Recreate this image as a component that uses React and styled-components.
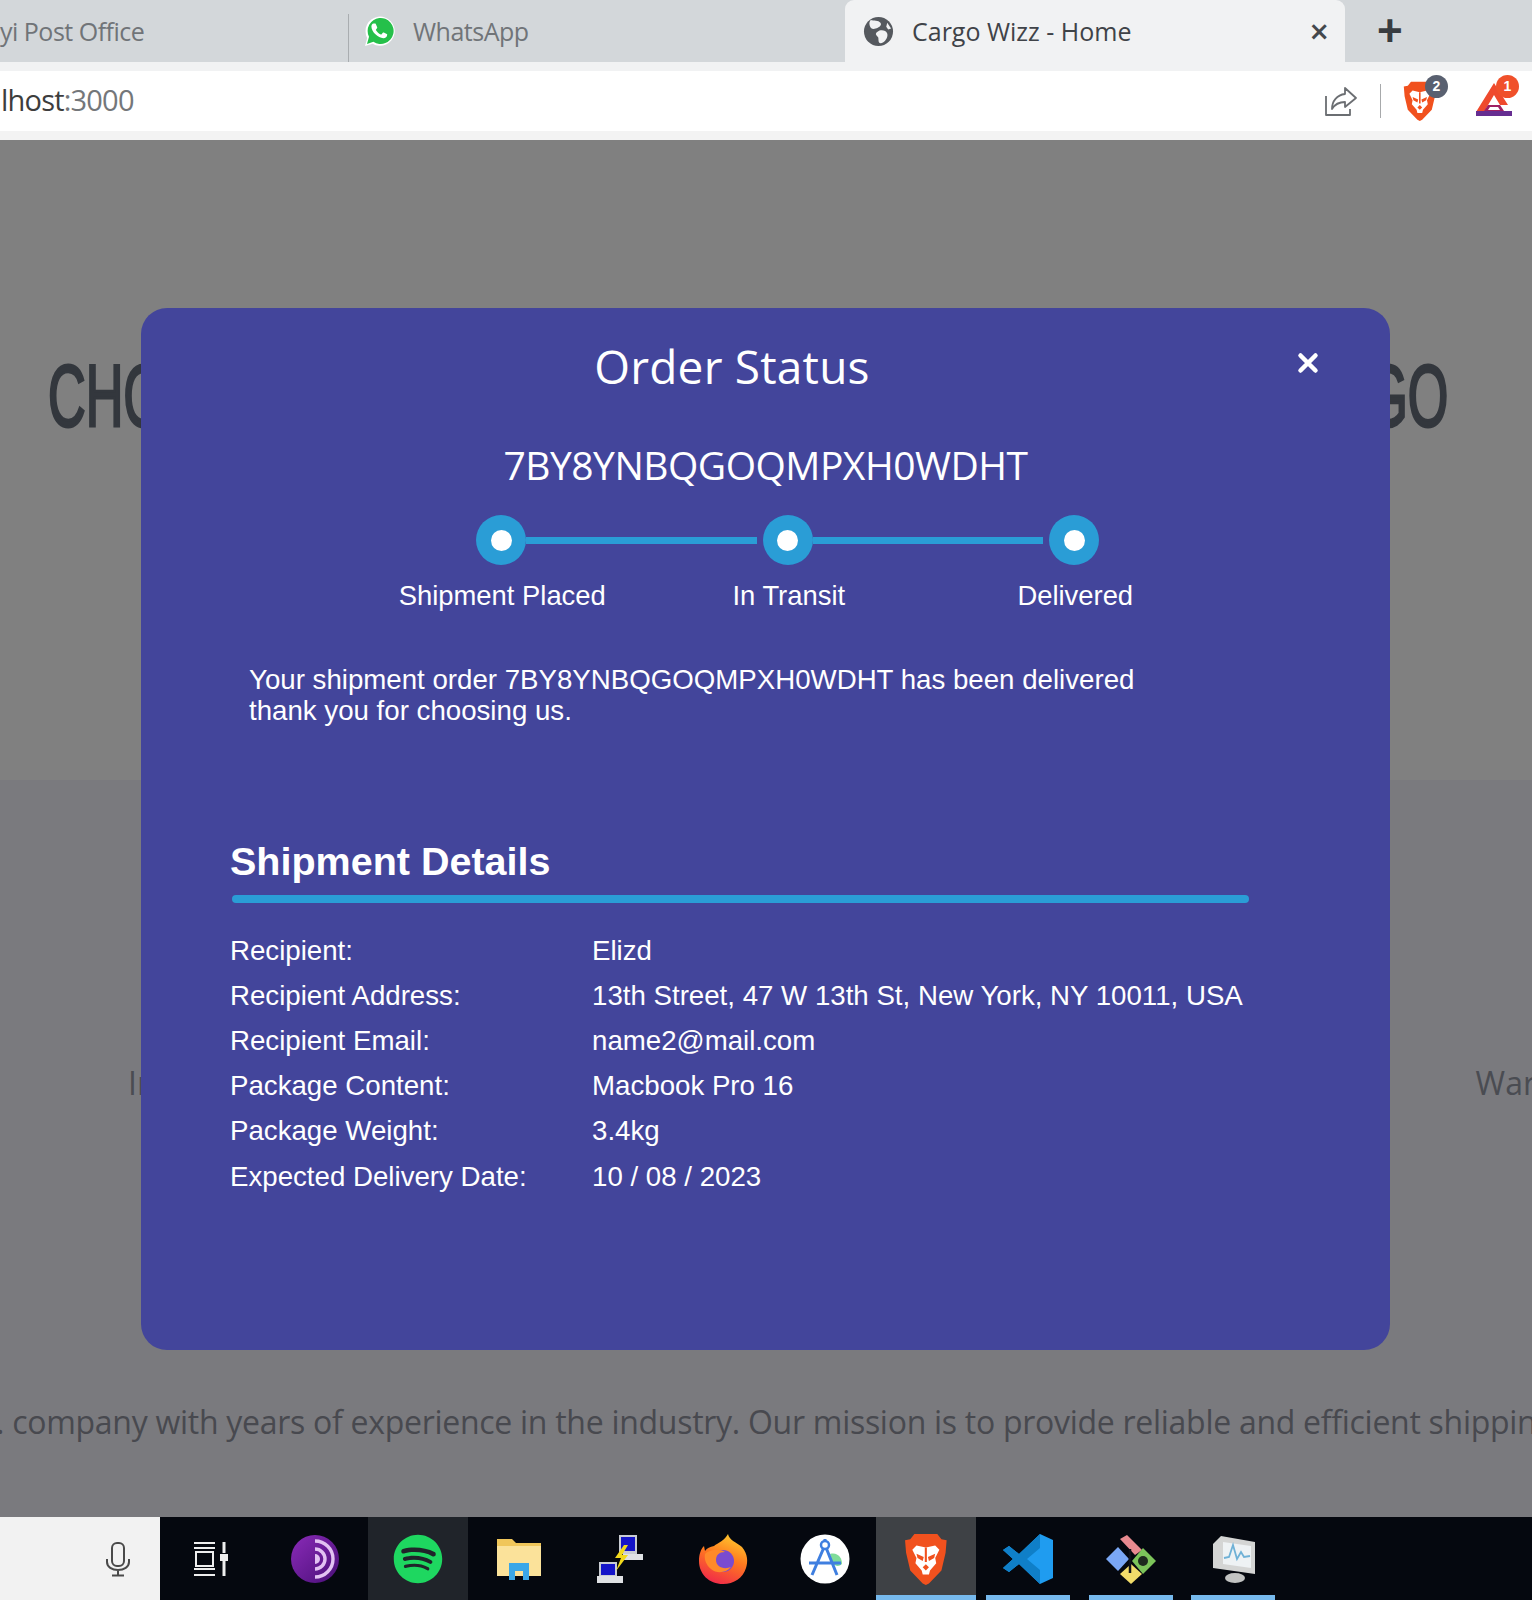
import { Fragment } from 'react';
import styled, { createGlobalStyle } from 'styled-components';
import { FaSpotify } from 'react-icons/fa';

const GlobalStyle = createGlobalStyle`
  html, body { margin: 0; padding: 0; background: #808080; }
  #root { width: 1532px; height: 1600px; overflow: hidden; }
`

const Screen = styled.div`
  display: flex;
  flex-direction: column;
  width: 1532px;
  height: 1600px;
  font-family: 'Liberation Sans', Arial, sans-serif;
`

/* browser chrome */
const TabStrip = styled.div`
  display: flex;
  align-items: stretch;
  height: 62px;
  flex: none;
  background: #d3d7da;
`

const Tab = styled.div`
  display: flex;
  align-items: center;
  box-sizing: border-box;
  width: ${p => p.$width}px;
  gap: 18px;
  padding-left: ${p => p.$inset}px;
  font-family: 'Open Sans', sans-serif;
  font-size: 25px;
  letter-spacing: -0.5px;
  color: #707478;
`

const TabDivider = styled.div`
  width: 1px;
  margin-top: 14px;
  background: #a9adb0;
`

const ActiveTab = styled(Tab)`
  position: relative;
  height: 71px;
  padding-right: 16px;
  padding-bottom: 9px;
  border-radius: 9px 9px 0 0;
  background: #f1f2f3;
  color: #3f4348;
  letter-spacing: 0;
  z-index: 1;
`

const TabTitle = styled.span`
  flex: 1;
`

const TabClose = styled.span`
  font-size: 34px;
  font-weight: 600;
  line-height: 1;
  color: #44484c;
`

const NewTab = styled.div`
  margin-left: 32px;
  align-self: center;
  font-family: 'Liberation Sans', sans-serif;
  font-size: 44px;
  font-weight: 700;
  line-height: 1;
  color: #383c40;
`

const Toolbar = styled.div`
  display: flex;
  align-items: center;
  box-sizing: border-box;
  height: 78px;
  flex: none;
  background: #fff;
  border-top: 9px solid #f1f2f3;
  border-bottom: 9px solid #f3f3f3;
`

const Url = styled.div`
  flex: 1;
  padding: 0 0 3px 1px;
  font-family: 'Open Sans', sans-serif;
  font-size: 29px;
  letter-spacing: -0.8px;
  color: #3d3d3d;
  span { color: #74777a; }
`

const ToolDivider = styled.div`
  width: 1px;
  height: 34px;
  margin: 0 22px 0 22px;
  background: #a7a9ab;
`

const ExtIcon = styled.div`
  position: relative;
  width: 36px;
  height: 40px;
  margin-right: ${p => p.$gap}px;
`

const ExtBadge = styled.span`
  position: absolute;
  top: -6px;
  right: ${p => p.$right}px;
  width: 23px;
  height: 23px;
  border-radius: 50%;
  background: ${p => p.$color};
  color: #fff;
  font-size: 14px;
  font-weight: 700;
  line-height: 23px;
  text-align: center;
`

/* dimmed page under the dialog */
const Page = styled.main`
  position: relative;
  flex: 1;
  display: flex;
  flex-direction: column;
  overflow: hidden;
  background: #7a7a7e;
`

const Hero = styled.section`
  display: flex;
  justify-content: space-between;
  box-sizing: border-box;
  height: 640px;
  flex: none;
  padding: 214px 84px 0 48px;
  background: #808080;
`

const HeroTitle = styled.h1`
  margin: 0;
  font-size: 87px;
  font-weight: 400;
  line-height: 84px;
  color: #33373d;
  -webkit-text-stroke: 3px #33373d;
  transform: scaleX(0.6);
  transform-origin: ${p => p.$origin};
`

const ServiceRow = styled.div`
  display: flex;
  justify-content: space-between;
  padding: 281px 0 0 128px;
  margin-right: -4px;
  font-family: 'Open Sans', sans-serif;
  font-size: 32px;
  line-height: 44px;
  color: #4a4c52;
`

const About = styled.p`
  margin: 295px 0 0 -4px;
  font-family: 'Open Sans', sans-serif;
  font-size: 32px;
  line-height: 44px;
  letter-spacing: -0.28px;
  white-space: nowrap;
  color: #48494f;
`

/* dialog */
const Modal = styled.div`
  position: absolute;
  left: 141px;
  top: 168px;
  display: flex;
  flex-direction: column;
  box-sizing: border-box;
  width: 1249px;
  height: 1042px;
  padding-top: 28px;
  border-radius: 26px;
  background: #43459b;
  color: #fff;
`

const ModalHeader = styled.div`
  display: flex;
  align-items: center;
  height: 60px;
`

const ModalTitle = styled.h2`
  flex: 1;
  margin: 0;
  font-family: 'Open Sans', sans-serif;
  font-size: 46px;
  font-weight: 500;
  letter-spacing: 0.2px;
  text-align: center;
`

const CloseButton = styled.button`
  display: flex;
  width: 67px;
  height: 60px;
  padding: 0 0 7px 0;
  align-items: center;
  justify-content: flex-start;
  border: 0;
  background: none;
  svg { margin-left: -26px; display: block; }
`

const OrderCode = styled.div`
  margin-top: 44px;
  font-family: 'Open Sans', sans-serif;
  font-size: 39px;
  line-height: 50px;
  letter-spacing: -0.5px;
  text-align: center;
`

const Track = styled.div`
  display: flex;
  align-items: center;
  width: 623px;
  margin: 25px 0 0 335px;
`

const TrackDot = styled.div`
  display: flex;
  align-items: center;
  justify-content: center;
  width: 50px;
  height: 50px;
  flex: none;
  border-radius: 50%;
  background: #2a9dd6;
  &::after {
    content: '';
    width: 21px;
    height: 21px;
    border-radius: 50%;
    background: #fff;
  }
`

const TrackLine = styled.div`
  flex: 1;
  height: 7px;
  margin-right: 6px;
  background: #2a9dd6;
`

const TrackLabels = styled.div`
  display: grid;
  grid-template-columns: repeat(3, 286.5px);
  margin: 15px 0 0 218px;
  font-size: 27.4px;
  line-height: 32px;
  text-align: center;
`

const Message = styled.p`
  width: 900px;
  margin: 53px 0 0 108px;
  font-size: 27.67px;
  line-height: 30.5px;
`

const SectionTitle = styled.h3`
  margin: 112px 0 0 89px;
  font-size: 39.5px;
  font-weight: 700;
  line-height: 46px;
`

const SectionRule = styled.div`
  width: 1017px;
  height: 8px;
  margin: 11px 0 0 91px;
  border-radius: 4px;
  background: #2a9dd6;
`

const Details = styled.dl`
  display: grid;
  grid-template-columns: 362px 1fr;
  grid-auto-rows: 45.2px;
  align-items: center;
  margin: 25px 0 0 89px;
  font-size: 27.67px;
  dt, dd { margin: 0; }
`

/* windows taskbar */
const Taskbar = styled.footer`
  display: flex;
  height: 83px;
  flex: none;
  background: #05080f;
`

const SearchBox = styled.div`
  display: flex;
  align-items: center;
  justify-content: flex-end;
  box-sizing: border-box;
  width: 160px;
  padding-right: 29px;
  background: #f2f2f2;
`

const TaskSlot = styled.div`
  position: relative;
  display: flex;
  align-items: center;
  justify-content: center;
  width: ${p => p.$width || 102}px;
  background: ${p => p.$active || 'transparent'};
  &::after {
    content: ${p => (p.$open ? "''" : 'none')};
    position: absolute;
    left: ${p => p.$inset || 0}px;
    right: ${p => p.$inset || 0}px;
    bottom: 0;
    height: 5px;
    background: #76b9ed;
  }
`

const WhatsAppIcon = () => (
  <svg width="32" height="32" viewBox="0 0 32 32">
    <path fill="#fff" d="M2 31l2.2-8A14.6 14.6 0 1 1 9.6 28.7z" />
    <path fill="#25c04a" d="M4 29l2-7.2A13 13 0 1 1 10.4 26.8z" />
    <path fill="#fff" d="M11.6 8.6c.5 0 1 0 1.3.7l1.3 3c.1.4 0 .8-.2 1l-1 1.2c-.2.3-.2.5 0 .8 1.2 2 2.7 3.3 4.8 4.2.3.1.6.1.8-.2l1.2-1.5c.3-.3.6-.3 1-.2l2.9 1.4c.4.2.6.4.5.8 0 2-1.8 3.4-3.8 3.4-5.5-.4-11.7-6-12-11.4 0-1.7.8-3.2 2.2-3.2z" />
  </svg>
)

const GlobeIcon = () => (
  <svg width="31" height="31" viewBox="0 0 32 32">
    <circle cx="16" cy="16" r="15" fill="#55595e" />
    <path fill="#f1f2f3" d="M8 4c3 1 8 0 10 3s-2 5-5 6-5 0-6-3 0-5 1-6zM17 15c3-1 7 0 8 3s-1 7-4 9-5 1-5-2 0-3-2-5 1-4 3-5zM25 7l4 6-3 1-2-3z" />
  </svg>
)

const ShareIcon = () => (
  <svg width="34" height="32" viewBox="0 0 34 32" fill="none" stroke="#6b6e72" strokeWidth="1.8" strokeLinejoin="round">
    <path d="M2 11v19h24v-6" />
    <path d="M21 3l11 10-11 9v-5c-6 0-10 2-13 7 0-8 5-14 13-15z" />
  </svg>
)

const BraveIcon = ({ size = 40 }) => (
  <svg width={size * 0.84} height={size} viewBox="0 0 42 50">
    <path fill="#f1511e" d="M10 1h22l4 5 5 1-1 12-4 17-12 12.5L21 50l-3-1.5L6 36 2 19 1 7l5-1z" />
    <path fill="#fff" d="M12 12l9 2 9-2 4 4-4 8 1 5-6 7-1 4h-6l-1-4-6-7 1-5-4-8z" />
    <path fill="#f1511e" d="M12 20l7 3-1 4-5-3zM30 20l-7 3 1 4 5-3zM20 14h2v14h-2zM18 33l3-3 3 3-3 3z" />
  </svg>
)

const BatIcon = () => (
  <svg width="38" height="36" viewBox="0 0 38 36">
    <path fill="#ef4a2d" d="M19 2L1 31h8L19 14l6 10h8z" />
    <path fill="#662d91" d="M1 30h36v5H1z" />
    <path fill="#9e1f63" d="M13 24h12l4 6H9z" />
    <path fill="#fff" d="M15 26h8l2 3H13z" />
  </svg>
)

const MicIcon = () => (
  <svg width="26" height="36" viewBox="0 0 26 36" fill="none" stroke="#4a4a4a" strokeWidth="2">
    <rect x="7" y="2" width="12" height="23" rx="5" />
    <path d="M2 18v3c0 5 5 8 11 8s11-3 11-8v-3M13 29v5M7 34.5h12" />
  </svg>
)

const TaskViewIcon = () => (
  <svg width="36" height="36" viewBox="0 0 36 36" fill="none" stroke="#eee" strokeWidth="2">
    <path d="M1 2h21M1 7h21M1 28h21M1 34h21" />
    <rect x="3" y="11" width="17" height="14" />
    <path d="M31 1v11M31 20v15" strokeWidth="3" />
    <rect x="27" y="13" width="8" height="7" fill="#eee" stroke="none" />
  </svg>
)

const TorIcon = () => (
  <svg width="50" height="50" viewBox="0 0 50 50" fill="none">
    <defs>
      <linearGradient id="tor" x1="0" y1="0" x2="1" y2="1">
        <stop offset="0" stopColor="#8a2bb8" />
        <stop offset="1" stopColor="#4a0f78" />
      </linearGradient>
    </defs>
    <circle cx="25" cy="25" r="24" fill="url(#tor)" />
    <path stroke="#e2c2f2" strokeWidth="3.4" d="M25 7a18 18 0 0 1 0 36M25 15a10 10 0 0 1 0 20" />
    <path fill="#e2c2f2" d="M25 20a5 5 0 0 1 0 10z" />
  </svg>
)

const FolderIcon = () => (
  <svg width="46" height="46" viewBox="0 0 46 46">
    <path fill="#f0c65a" d="M1 3h15l4 4h25v32H1z" />
    <path fill="#fbe29a" d="M1 10h44v30H1z" />
    <path fill="#3aa7e8" d="M13 44V27h20v17h-6v-9h-8v9z" />
  </svg>
)

const NetworkIcon = () => (
  <svg width="48" height="50" viewBox="0 0 48 50">
    <path fill="#c9ccd2" d="M22 1h18v19H22zM2 28h18v15H2z" />
    <path fill="#1414c8" d="M24 3h14v14H24zM4 30h14v11H4z" />
    <path fill="#dfe1e4" d="M26 20h20v6H26zM0 42h26v7H0z" />
    <path fill="#f2d91c" d="M27 11l-9 13h6l-5 13 12-16h-6l6-10z" />
  </svg>
)

const FirefoxIcon = () => (
  <svg width="50" height="50" viewBox="0 0 50 50">
    <defs>
      <linearGradient id="fx" x1="0.7" y1="0" x2="0.3" y2="1">
        <stop offset="0" stopColor="#ffcb2e" />
        <stop offset="0.45" stopColor="#ff7a1f" />
        <stop offset="1" stopColor="#f0284a" />
      </linearGradient>
    </defs>
    <path fill="url(#fx)" d="M30 0c1 6 8 8 14 13 6 7 6 15 4 21-3 10-12 16-23 16C11 50 1 40 1 27c0-5 1-11 5-15l1 5c2-3 5-4 9-5 4-3 11-6 14-12z" />
    <circle cx="25" cy="27" r="11" fill="#7a4bd0" />
    <path fill="#ff8a2a" d="M7 20c4-4 14-6 20-2-6 0-9 3-9 8 0 7 8 10 15 7-5 6-14 7-20 2-5-4-7-10-6-15z" />
  </svg>
)

const AppStoreIcon = () => (
  <svg width="50" height="50" viewBox="0 0 50 50" fill="none">
    <circle cx="25" cy="25" r="24.5" fill="#fff" />
    <path fill="#7fdc9a" d="M30 20c8-2 12 4 12 10-3 3-7 2-9 0z" />
    <path stroke="#3f7fe0" strokeWidth="3" d="M25 5v6M25 11L12 41M25 11l12 30M9 29h32" />
    <circle cx="25" cy="11" r="4" fill="#fff" stroke="#3f7fe0" strokeWidth="2.5" />
  </svg>
)

const VsCodeIcon = () => (
  <svg width="50" height="50" viewBox="0 0 50 50">
    <path fill="#1f9cf0" d="M37 0l13 6v38l-13 6L16 30 6 38l-6-4 10-9L0 16l6-4 10 8z" />
    <path fill="#0f7fc8" d="M37 0v14L24 25l13 11v14L16 30 6 38l-6-4 10-9L0 16l6-4 10 8z" />
  </svg>
)

const GitIcon = () => (
  <svg width="52" height="50" viewBox="0 0 52 50">
    <path fill="#7aa7f5" d="M13 13l11 12-11 12L1 25z" />
    <path fill="#e98a90" d="M15 5l7-4 15 15-7 5z" />
    <path fill="#7cc45a" d="M38 14l13 13-13 13-11-13z" />
    <path fill="#f2dc6a" d="M26 30l11 10-11 10-11-10z" />
    <circle cx="38" cy="27" r="5" fill="#1e2a1e" />
    <path stroke="#10131a" strokeWidth="2.5" d="M25 15v24" />
  </svg>
)

const MonitorIcon = () => (
  <svg width="48" height="50" viewBox="0 0 48 50">
    <path fill="#d4d5d4" d="M12 2l34 6v32L4 34V10z" />
    <path fill="#eef2f4" d="M14 8l28 4v22L14 30z" />
    <path fill="none" stroke="#6fb1d6" strokeWidth="1.8" d="M15 24l5-1 4-12 4 14 4-7 3 5 6-1" />
    <ellipse cx="26" cy="44" rx="10" ry="5" fill="#c2c3c2" />
  </svg>
)

const details = [
  ['Recipient:', 'Elizd'],
  ['Recipient Address:', '13th Street, 47 W 13th St, New York, NY 10011, USA'],
  ['Recipient Email:', 'name2@mail.com'],
  ['Package Content:', 'Macbook Pro 16'],
  ['Package Weight:', '3.4kg'],
  ['Expected Delivery Date:', '10 / 08 / 2023'],
]

const App = () => {
  return (
    <Screen>
      <GlobalStyle />
      <TabStrip>
        <Tab $width={348} $inset={0}>yi Post Office</Tab>
        <TabDivider />
        <Tab $width={496} $inset={14}><WhatsAppIcon />WhatsApp</Tab>
        <ActiveTab $width={500} $inset={18}>
          <GlobeIcon />
          <TabTitle>Cargo Wizz - Home</TabTitle>
          <TabClose>×</TabClose>
        </ActiveTab>
        <NewTab>+</NewTab>
      </TabStrip>
      <Toolbar>
        <Url>lhost<span>:3000</span></Url>
        <ShareIcon />
        <ToolDivider />
        <ExtIcon $gap={36}>
          <BraveIcon />
          <ExtBadge $right={-9} $color="#596070">2</ExtBadge>
        </ExtIcon>
        <ExtIcon $gap={21}>
          <BatIcon />
          <ExtBadge $right={-8} $color="#f0502a">1</ExtBadge>
        </ExtIcon>
      </Toolbar>
      <Page>
        <Hero>
          <HeroTitle $origin="left">CHO</HeroTitle>
          <HeroTitle $origin="right">GO</HeroTitle>
        </Hero>
        <ServiceRow>
          <span>In</span>
          <span>War</span>
        </ServiceRow>
        <About>. company with years of experience in the industry. Our mission is to provide reliable and efficient shipping</About>
        <Modal>
          <ModalHeader>
            <ModalTitle>Order Status</ModalTitle>
            <CloseButton aria-label="Close">
              <svg width="22" height="22" viewBox="0 0 22 22" stroke="#fff" strokeWidth="4.5" strokeLinecap="round">
                <path d="M3.5 3.5l15 15M18.5 3.5l-15 15" />
              </svg>
            </CloseButton>
          </ModalHeader>
          <OrderCode>7BY8YNBQGOQMPXH0WDHT</OrderCode>
          <Track>
            <TrackDot />
            <TrackLine />
            <TrackDot />
            <TrackLine />
            <TrackDot />
          </Track>
          <TrackLabels>
            <span>Shipment Placed</span>
            <span>In Transit</span>
            <span>Delivered</span>
          </TrackLabels>
          <Message>Your shipment order 7BY8YNBQGOQMPXH0WDHT has been delivered thank you for choosing us.</Message>
          <SectionTitle>Shipment Details</SectionTitle>
          <SectionRule />
          <Details>
            {details.map(([label, value]) => (
              <Fragment key={label}>
                <dt>{label}</dt>
                <dd>{value}</dd>
              </Fragment>
            ))}
          </Details>
        </Modal>
      </Page>
      <Taskbar>
        <SearchBox><MicIcon /></SearchBox>
        <TaskSlot $width={102}><TaskViewIcon /></TaskSlot>
        <TaskSlot $width={106}><TorIcon /></TaskSlot>
        <TaskSlot $width={100} $active="#20242a"><FaSpotify size={50} color="#1ed760" /></TaskSlot>
        <TaskSlot><FolderIcon /></TaskSlot>
        <TaskSlot><NetworkIcon /></TaskSlot>
        <TaskSlot><FirefoxIcon /></TaskSlot>
        <TaskSlot><AppStoreIcon /></TaskSlot>
        <TaskSlot $width={100} $active="#3e4145" $open><BraveIcon size={52} /></TaskSlot>
        <TaskSlot $open $inset={10} $width={104}><VsCodeIcon /></TaskSlot>
        <TaskSlot $open $inset={9}><GitIcon /></TaskSlot>
        <TaskSlot $open $inset={9}><MonitorIcon /></TaskSlot>
      </Taskbar>
    </Screen>
  )
}

export default App;
